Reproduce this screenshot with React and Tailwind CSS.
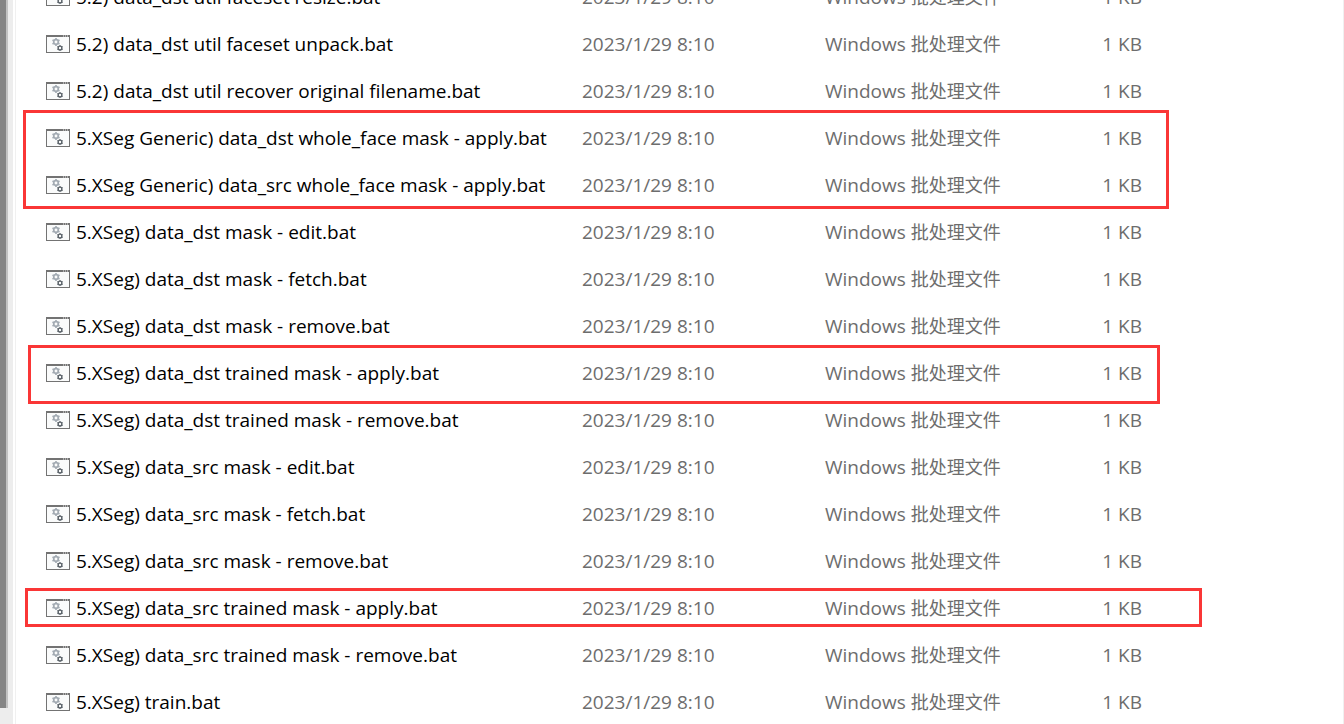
const files = [
    '5.2) data_dst util faceset resize.bat',
    '5.2) data_dst util faceset unpack.bat',
    '5.2) data_dst util recover original filename.bat',
    '5.XSeg Generic) data_dst whole_face mask - apply.bat',
    '5.XSeg Generic) data_src whole_face mask - apply.bat',
    '5.XSeg) data_dst mask - edit.bat',
    '5.XSeg) data_dst mask - fetch.bat',
    '5.XSeg) data_dst mask - remove.bat',
    '5.XSeg) data_dst trained mask - apply.bat',
    '5.XSeg) data_dst trained mask - remove.bat',
    '5.XSeg) data_src mask - edit.bat',
    '5.XSeg) data_src mask - fetch.bat',
    '5.XSeg) data_src mask - remove.bat',
    '5.XSeg) data_src trained mask - apply.bat',
    '5.XSeg) data_src trained mask - remove.bat',
    '5.XSeg) train.bat',
].map((name) => ({ name, modified: '2023/1/29 8:10', size: '1 KB' }));

// Red boxes drawn over the list
const marks = [
    'left-[7px] top-[110px] w-[1146px] h-[99px]',
    'left-[12px] top-[345px] w-[1132px] h-[59px]',
    'left-[9px] top-[588px] w-[1177px] h-[39px]',
];

const BatIcon = () => (
    <svg width="24" height="18" viewBox="0 0 24 18" className="shrink-0" aria-hidden="true">
        <rect x="0.5" y="0.5" width="23" height="17" fill="#fafbfb" stroke="#737373" />
        <rect width="24" height="2" fill="#737373" />
        <path d="M17 1h1M19 1h1M21 1h1" stroke="#e8e8e8" />
        <g stroke="#a3abb3" fill="none">
            <path d="M10 3v8M6.5 5l7 4M6.5 9l7-4" strokeWidth="1.6" />
            <circle cx="10" cy="7" r="2.3" strokeWidth="1.7" fill="#fafbfb" />
        </g>
        <g stroke="#596168" fill="none">
            <path d="M14 10v6M11.4 11.5l5.2 3M11.4 14.5l5.2-3" strokeWidth="1" />
            <circle cx="14" cy="13" r="1.9" strokeWidth="1.4" fill="#fafbfb" />
        </g>
    </svg>
);

const FileRow = ({ file }) => (
    <tr className="h-[47px]">
        <td className="pl-[30px] text-black">
            <div className="flex items-center gap-[6px]">
                <BatIcon />
                <span>{file.name}</span>
            </div>
        </td>
        <td>{file.modified}</td>
        <td>
            Windows <span className="text-lg leading-6">批处理文件</span>
        </td>
        <td className="text-right">{file.size}</td>
        <td></td>
    </tr>
);

const App = () => {
    return (
        <div className="flex h-screen overflow-hidden bg-white font-['Open_Sans','Noto_Sans_CJK_SC',sans-serif] text-[19px] leading-6 text-[#6d6d6d]">
            {/* Scrollbar of the folder tree */}
            <div className="w-[13px] shrink-0 bg-[#ededed] pb-4">
                <div className="h-full w-2 border-r-2 border-[#c2c2c2] bg-[#858585]"></div>
            </div>

            <main className="relative ml-[2px] min-w-0 flex-1 border-x border-[#f0f0f0]">
                <table className="-mt-[27px] w-full table-fixed whitespace-nowrap">
                    <colgroup>
                        <col className="w-[566px]" />
                        <col className="w-[243px]" />
                        <col className="w-[190px]" />
                        <col className="w-[127px]" />
                        <col />
                    </colgroup>
                    <tbody>
                        {files.map((file) => (
                            <FileRow key={file.name} file={file} />
                        ))}
                    </tbody>
                </table>
                {marks.map((mark) => (
                    <div key={mark} className={`absolute border-3 border-[#fa3636] ${mark}`}></div>
                ))}
            </main>
        </div>
    );
};

export default App;
